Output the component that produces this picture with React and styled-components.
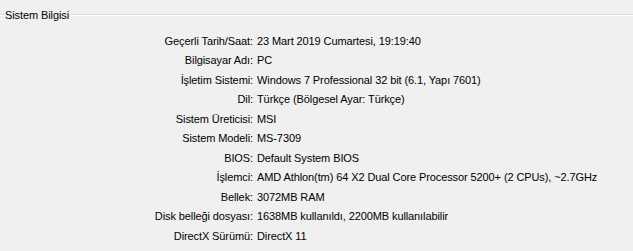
import React from "react";
import styled, { createGlobalStyle } from "styled-components";

const Global = createGlobalStyle`
  html, body { margin: 0; padding: 0; background: #f0f0f0; }
  body { font-family: "Liberation Sans", Arial, sans-serif; font-size: 11px; color: #000; letter-spacing: -0.1px; }
`;

const Group = styled.section`
  width: 633px;
  height: 251px;
  background: #f0f0f0;
`;

const Header = styled.div`
  display: flex;
  align-items: center;
  height: 29px;
`;

const Line = styled.div`
  flex: ${(p) => (p.$grow ? 1 : "0 0 4px")};
  height: 0;
  border-top: 1px solid #d5dfe5;
  border-bottom: 1px solid #ffffff;
`;

const Title = styled.span`
  padding: 0 2px 0 1px;
  line-height: 14px;
  white-space: nowrap;
`;

const Grid = styled.div`
  display: grid;
  grid-template-columns: 253px 1fr;
  column-gap: 4px;
  grid-auto-rows: 19.5px;
  padding-top: 2px;
  align-items: center;
`;

const Label = styled.div`
  text-align: right;
  white-space: nowrap;
`;

const Value = styled.div`
  white-space: nowrap;
`;

const rows = [
  ["Geçerli Tarih/Saat:", "23 Mart 2019 Cumartesi, 19:19:40"],
  ["Bilgisayar Adı:", "PC"],
  ["İşletim Sistemi:", "Windows 7 Professional 32 bit (6.1, Yapı 7601)"],
  ["Dil:", "Türkçe (Bölgesel Ayar: Türkçe)"],
  ["Sistem Üreticisi:", "MSI"],
  ["Sistem Modeli:", "MS-7309"],
  ["BIOS:", "Default System BIOS"],
  ["İşlemci:", "AMD Athlon(tm) 64 X2 Dual Core Processor 5200+ (2 CPUs), ~2.7GHz"],
  ["Bellek:", "3072MB RAM"],
  ["Disk belleği dosyası:", "1638MB kullanıldı, 2200MB kullanılabilir"],
  ["DirectX Sürümü:", "DirectX 11"],
];

export default function App() {
  return (
    <>
      <Global />
      <Group>
        <Header>
          <Line />
          <Title>Sistem Bilgisi</Title>
          <Line $grow />
        </Header>
        <Grid>
          {rows.map(([l, v]) => (
            <React.Fragment key={l}>
              <Label>{l}</Label>
              <Value>{v}</Value>
            </React.Fragment>
          ))}
        </Grid>
      </Group>
    </>
  );
}
